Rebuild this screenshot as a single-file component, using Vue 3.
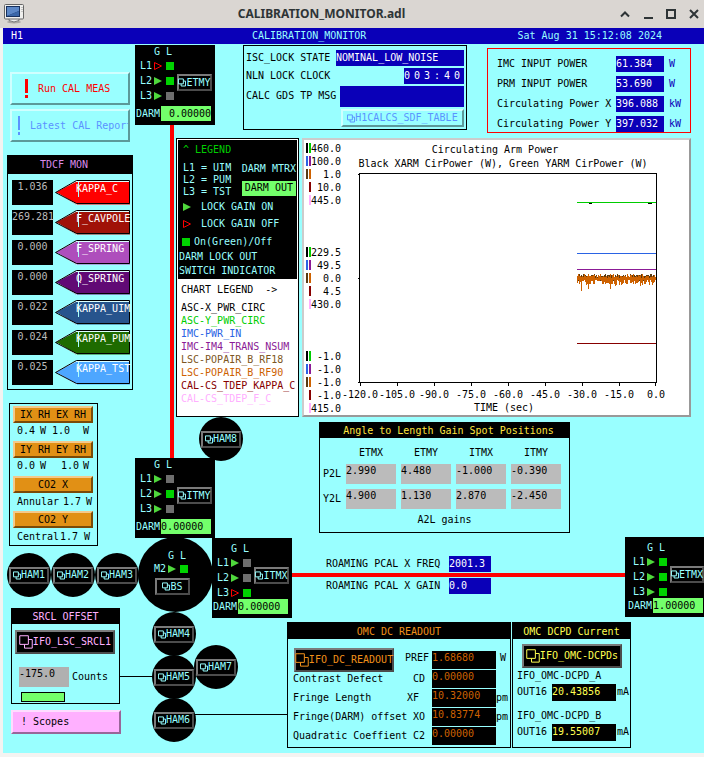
<script setup>
const optics = [
  { name: 'ETMY', place: 'etmy', darm: '0.00000', legs: [['L1', false, true], ['L2', true, true], ['L3', true, false]] },
  { name: 'ITMY', place: 'itmy', darm: '0.00000', legs: [['L1', true, false], ['L2', true, true], ['L3', true, false]] },
  { name: 'ITMX', place: 'itmx', darm: '0.00000', legs: [['L1', true, false], ['L2', true, false], ['L3', false, true]] },
  { name: 'ETMX', place: 'etmx', darm: '1.00000', legs: [['L1', true, true], ['L2', true, true], ['L3', true, true]] },
]
const hams = [1, 2, 3, 4, 5, 6, 7, 8]

const factors = [
  { name: 'KAPPA_C', value: '1.036', color: '#ff0000' },
  { name: 'F_CAVPOLE', value: '269.281', color: '#a01208' },
  { name: 'F_SPRING', value: '0.000', color: '#ae4ebc' },
  { name: 'Q_SPRING', value: '0.000', color: '#610a75' },
  { name: 'KAPPA_UIM', value: '0.022', color: '#27548d' },
  { name: 'KAPPA_PUM', value: '0.024', color: '#1e6b00' },
  { name: 'KAPPA_TST', value: '0.025', color: '#4da6ff' },
]

const powers = [
  ['IMC INPUT POWER', '61.384', 'W'],
  ['PRM INPUT POWER', '53.690', 'W'],
  ['Circulating Power X', '396.088', 'kW'],
  ['Circulating Power Y', '397.032', 'kW'],
]

const channels = [
  ['ASC-X_PWR_CIRC', '#000000'],
  ['ASC-Y_PWR_CIRC', '#00cd00'],
  ['IMC-PWR_IN', '#2a63e4'],
  ['IMC-IM4_TRANS_NSUM', '#8b1a96'],
  ['LSC-POPAIR_B_RF18', '#7d5623'],
  ['LSC-POPAIR_B_RF90', '#cd6100'],
  ['CAL-CS_TDEP_KAPPA_C', '#870000'],
  ['CAL-CS_TDEP_F_C', '#ffb0ff'],
]

const spotHeads = ['ETMX', 'ETMY', 'ITMX', 'ITMY']
const spots = [
  ['P2L', ['2.990', '4.480', '-1.000', '-0.390']],
  ['Y2L', ['4.900', '1.130', '2.870', '-2.450']],
]

const readout = [
  ['Contrast Defect', 'CD', '0.00000', ''],
  ['Fringe Length', 'XF ', '10.32000', 'pm'],
  ['Fringe(DARM) offset', 'XO', '10.83774', 'pm'],
  ['Quadratic Coeffient', 'C2', '0.00000', ''],
]

const axisPairs = [
  ['#000000', '#00cd00'],
  ['#2a63e4', '#8b1a96'],
  ['#593a12', '#cd6100'],
  [null, '#870000'],
  [null, '#ffb0ff'],
]
const axisGroups = [
  { top: 148, labels: ['460.0', '100.0', '1.0', '10.0', '445.0'] },
  { top: 252, labels: ['229.5', '49.5', '0.0', '4.5', '430.0'] },
  { top: 356, labels: ['-1.0', '-1.0', '-1.0', '-1.0', '415.0'] },
]
const ticks = ['-120.0', '-105.0', '-90.0', '-75.0', '-60.0', '-45.0', '-30.0', '-15.0', '0.0']

function noise(seed, base, up, down, spike) {
  let s = seed
  const next = () => (s = (s * 1103515245 + 12345) % 2147483648) / 2147483648
  let d = ''
  for (let x = 577; x < 656; x++) {
    const rare = next() > 0.86 ? spike : 0
    const a = Math.round(base - next() * up)
    const b = Math.round(base + 2 + next() * down + rare * next())
    d += `M${x}.5 ${a}V${b}`
  }
  return d
}
const brown = noise(7, 277, 3, 2, 0)
const orange = noise(21, 278, 4, 5, 9)
</script>

<template>
  <div class="window">
    <svg width="0" height="0" class="defs" aria-hidden="true">
      <symbol id="related" viewBox="0 0 13 13">
        <path d="M.7.7h8v8h-8zM8.700 4.200h3.600v8h-7.200v-3.500" fill="none" stroke="currentColor" vector-effect="non-scaling-stroke" />
      </symbol>
    </svg>

    <div class="titlebar">
      <svg class="app-icon" viewBox="0 0 20 20" width="20" height="20">
        <ellipse cx="10" cy="18" rx="7" ry="1.500" fill="#aaa7a3" />
        <path d="M5 16.500q5 3 10 0v-2H5z" fill="#eee" stroke="#777" />
        <rect x=".5" y=".5" width="19" height="14.500" rx="1" fill="#efefed" stroke="#666" />
        <rect x="2" y="2" width="14" height="11" fill="#17305c" />
        <path d="M3 3h12v4L3 12z" fill="#5c87c6" />
        <path d="M3 12L15 7v5z" fill="#3a66a8" />
        <path d="M18 3v5" stroke="#999" stroke-dasharray="1 1" />
      </svg>
      <h1>CALIBRATION_MONITOR.adl</h1>
      <div class="controls">
        <button aria-label="Shade"><svg viewBox="0 0 12 12"><path d="M2 8.500l4-4 4 4" /></svg></button>
        <button aria-label="Minimize"><svg viewBox="0 0 12 12"><path d="M2 10h9" /></svg></button>
        <button aria-label="Maximize"><svg viewBox="0 0 12 12"><path d="M2 2h8v8h-8z" /></svg></button>
        <button aria-label="Close"><svg viewBox="0 0 12 12"><path d="M2 2l8 8M10 2l-8 8" /></svg></button>
      </div>
    </div>

    <div class="screen">
      <header class="banner">
        <span class="site">H1</span>
        <span class="name">CALIBRATION_MONITOR</span>
        <span class="clock">Sat Aug 31 15:12:08 2024</span>
      </header>

      <main class="board">
        <aside class="left">
          <div class="actions">
            <button class="action run"><span class="bang"></span>Run CAL MEAS</button>
            <button class="action report"><span class="bang"></span>Latest CAL Report</button>
          </div>

          <section class="panel tdcf">
            <h2>TDCF MON</h2>
            <div v-for="f in factors" :key="f.name" class="factor">
              <span class="factor-value">{{ f.value }}</span>
              <button class="arrow">
                <svg viewBox="0 0 76 26" width="76" height="26" aria-hidden="true">
                  <path d="M1 12.500L21 1h54v23.500H21z" :fill="f.color" />
                  <path d="M2 13L22 24.500M1 11.500L21 1.500h53" fill="none" stroke="#dff" />
                  <path d="M.5 12.500L21.500.5h53v23h-53z" fill="none" stroke="#000" />
                  <path d="M23.500 2v15" stroke="#aff" />
                </svg>
                <span>{{ f.name }}</span>
              </button>
            </div>
          </section>

          <section class="panel heaters">
            <button class="amber">IX RH EX RH</button>
            <p><span>0.4</span><span>W</span><span>1.0</span><span>W</span></p>
            <button class="amber">IY RH EY RH</button>
            <p><span>0.0</span><span>W</span><span class="end">1.0</span><span>W</span></p>
            <button class="amber">CO2 X</button>
            <p class="co2"><span>Annular</span><span>1.7</span><span>W</span></p>
            <button class="amber">CO2 Y</button>
            <p class="co2 tight"><span>Central</span><span>1.7</span><span>W</span></p>
          </section>

          <section class="panel srcl">
            <h2>SRCL OFFSET</h2>
            <button class="dark big pink"><svg><use href="#related" /></svg>IFO_LSC_SRCL1</button>
            <label class="offset"><input class="field" value="-175.0" />Counts</label>
            <div class="meter"></div>
          </section>
          <button class="scopes">! Scopes</button>
        </aside>

        <div class="right">
          <div class="row top">
            <section class="panel lock">
              <div class="line"><span>ISC_LOCK STATE</span><span class="blue state">NOMINAL_LOW_NOISE</span></div>
              <div class="line"><span>NLN LOCK CLOCK</span><span class="blue digits"><span v-for="(c, i) in '003:40'" :key="i">{{ c }}</span></span></div>
              <div class="line tall"><span>CALC GDS TP MSG</span><span class="blue message"></span></div>
              <button class="sdf"><svg><use href="#related" /></svg>H1CALCS_SDF_TABLE</button>
            </section>
            <section class="panel power">
              <div v-for="p in powers" :key="p[0]" class="power-row">
                <span>{{ p[0] }}</span><span class="blue">{{ p[1] }}</span><span class="unit">{{ p[2] }}</span>
              </div>
            </section>
          </div>

          <div class="row mid">
            <section class="legend">
              <div class="keys">
                <h2>^ LEGEND</h2>
                <div class="stages">
                  <div><p>L1 = UIM</p><p>L2 = PUM</p><p>L3 = TST</p></div>
                  <div><p class="mtrx">DARM MTRX</p><p class="out">DARM OUT</p></div>
                </div>
                <p class="key"><svg class="tri" viewBox="0 0 8 8"><path class="on" d="M0 0l8 4-8 4z" /></svg>LOCK GAIN ON</p>
                <p class="key"><svg class="tri" viewBox="0 0 8 8"><path class="off" d="M.5 .5l7 3.500-7 3.500z" /></svg>LOCK GAIN OFF</p>
                <p class="key switch"><i class="square lit"></i>On(Green)/Off</p>
                <p class="note">DARM LOCK OUT</p>
                <p class="note">SWITCH INDICATOR</p>
              </div>
              <div class="channels">
                <h3>CHART LEGEND&nbsp; -&gt;</h3>
                <p v-for="c in channels" :key="c[0]" :style="{ color: c[1] }">{{ c[0] }}</p>
              </div>
            </section>

            <section class="chart">
              <svg viewBox="304 140 385 276" height="276" role="img" aria-label="Circulating Arm Power">
                <g class="labels">
                  <text x="495" y="153" text-anchor="middle">Circulating Arm Power</text>
                  <text x="503" y="167" text-anchor="middle">Black XARM CirPower (W), Green YARM CirPower (W)</text>
                  <g v-for="g in axisGroups" :key="g.top">
                    <g v-for="(l, i) in g.labels" :key="i">
                      <rect v-if="axisPairs[i][0]" x="306" :y="g.top + i * 13 - 5" width="2" height="10" :fill="axisPairs[i][0]" />
                      <rect x="309" :y="g.top + i * 13 - 5" width="2" height="10" :fill="axisPairs[i][1]" />
                      <text x="341" :y="g.top + i * 13 + 4" text-anchor="end">{{ l }}</text>
                    </g>
                  </g>
                  <text v-for="(t, i) in ticks" :key="t" :x="360 + i * 37" y="398" text-anchor="middle">{{ t }}</text>
                  <text x="504" y="411" text-anchor="middle">TIME (sec)</text>
                </g>
                <g fill="none" shape-rendering="crispEdges">
                  <path d="M577 202.500h79" stroke="#00cd00" />
                  <path d="M589 203.500h3M648 203.500h4" stroke="#000" />
                  <path d="M577 253.500h79" stroke="#2a63e4" />
                  <path d="M577 269.500h79" stroke="#8b1a96" />
                  <path d="M577 343.500h79" stroke="#870000" />
                  <path :d="brown" stroke="#593a12" />
                  <path :d="orange" stroke="#cd6100" />
                  <path d="M359.500 173.500h297v209h-297z" stroke="#000" />
                  <path d="M358 174.500h2M358 278.500h2M358 382.500h2" stroke="#000" />
                  <path v-for="(t, i) in ticks" :key="t" :d="`M${360.5 + i * 37 - (i === 8 ? 1 : 0)} 383v3`" stroke="#000" />
                </g>
              </svg>
            </section>
          </div>

          <section class="panel spots">
            <h2>Angle to Length Gain Spot Positions</h2>
            <table>
              <thead><tr><td></td><th v-for="h in spotHeads" :key="h" scope="col">{{ h }}</th></tr></thead>
              <tbody>
                <tr v-for="r in spots" :key="r[0]">
                  <th scope="row">{{ r[0] }}</th>
                  <td v-for="(v, i) in r[1]" :key="i"><input class="field" :value="v" :aria-label="`${r[0]} ${spotHeads[i]}`" /></td>
                </tr>
              </tbody>
            </table>
            <p>A2L gains</p>
          </section>

          <section class="roaming">
            <div><span>ROAMING PCAL X FREQ</span><span class="blue">2001.3</span></div>
            <div><span>ROAMING PCAL X GAIN</span><span class="blue">0.0</span></div>
          </section>

          <div class="row omc">
            <section class="panel readout">
              <h2>OMC DC READOUT</h2>
              <div class="read-row first">
                <button class="dark big orange"><svg><use href="#related" /></svg>IFO_DC_READOUT</button>
                <span class="code">PREF</span><span class="black">1.68680</span><span class="center">W</span>
              </div>
              <div v-for="r in readout" :key="r[0]" class="read-row">
                <span>{{ r[0] }}</span><span class="code">{{ r[1] }}</span><span class="black">{{ r[2] }}</span><span>{{ r[3] }}</span>
              </div>
            </section>
            <section class="panel dcpd">
              <h2>OMC DCPD Current</h2>
              <button class="dark big yellow"><svg><use href="#related" /></svg>IFO_OMC-DCPDs</button>
              <div class="diode"><p>IFO_OMC-DCPD_A</p><div><span>OUT16</span><span class="black">20.43856</span><span>mA</span></div></div>
              <div class="diode"><p>IFO_OMC-DCPD_B</p><div><span>OUT16</span><span class="black">19.55007</span><span>mA</span></div></div>
            </section>
          </div>
        </div>

        <!-- Interferometer diagram: beams, chambers and suspensions -->
        <div class="beam arm-y"></div>
        <div class="beam arm-x"></div>
        <div class="wire wire-srcl"></div>
        <div class="wire wire-omc"></div>

        <div v-for="n in hams" :key="n" class="chamber" :class="`ham${n}`">
          <button class="dark"><svg><use href="#related" /></svg>HAM{{ n }}</button>
        </div>

        <div class="splitter">
          <div class="legs">
            <span></span><span>G</span><span>L</span>
            <span>M2</span><svg class="tri" viewBox="0 0 8 8"><path class="on" d="M0 0l8 4-8 4z" /></svg><i class="square lit"></i>
          </div>
          <button class="dark"><svg><use href="#related" /></svg>BS</button>
        </div>

        <div v-for="o in optics" :key="o.name" class="optic" :class="o.place">
          <div class="optic-body">
            <div class="legs">
              <span></span><span>G</span><span>L</span>
              <template v-for="l in o.legs" :key="l[0]">
                <span>{{ l[0] }}</span>
                <svg class="tri" viewBox="0 0 8 8">
                  <path v-if="l[1]" class="on" d="M0 0l8 4-8 4z" />
                  <path v-else class="off" d="M.5 .5l7 3.500-7 3.500z" />
                </svg>
                <i class="square" :class="{ lit: l[2] }"></i>
              </template>
            </div>
            <button class="dark"><svg><use href="#related" /></svg>{{ o.name }}</button>
          </div>
          <label class="darm">DARM<input :value="o.darm" /></label>
        </div>
      </main>
    </div>
  </div>
</template>

<style>
body {
  margin: 0;
  background: #f4f3f1;
}
</style>

<style scoped>
* {
  box-sizing: border-box;
}
.window {
  font: 10px/12px "DejaVu Sans Mono", "Liberation Mono", monospace;
  color: #000;
  white-space: nowrap;
}
.defs {
  position: absolute;
}
h1, h2, h3, p {
  margin: 0;
  font-size: inherit;
  font-weight: normal;
}
button, input {
  font: inherit;
  color: inherit;
  margin: 0;
  padding: 0;
  border: 0;
  border-radius: 0;
  white-space: nowrap;
  min-width: 0;
}
.titlebar {
  display: flex;
  align-items: center;
  height: 28px;
  padding: 0 2px 0 4px;
  background: #dad6d2;
}
.titlebar h1 {
  flex: 1;
  text-align: center;
  font: bold 12px/20px "Noto Sans", "Open Sans", sans-serif;
  color: #2e3436;
}
.controls {
  display: flex;
  gap: 11px;
  padding-right: 2px;
}
.controls button {
  width: 12px;
  height: 12px;
  background: none;
}
.controls svg {
  display: block;
  width: 12px;
  height: 12px;
  fill: none;
  stroke: #2e3436;
  stroke-width: 2;
}
.screen {
  margin: 0 0 4px 3px;
}
.banner {
  display: flex;
  height: 16px;
  padding: 0 42px 0 8px;
  background: #0a00b8;
  color: #9ff;
  line-height: 15px;
}
.site {
  width: 241px;
  color: #fff;
}
.name {
  flex: 1;
}
.board {
  position: relative;
  display: flex;
  background: #9ff;
}
.left {
  width: 173px;
  padding: 28px 0 19px 4px;
}
.right {
  flex: 1;
  min-width: 0;
  padding: 1px 13px 5px 0;
}
.panel {
  border: 1px solid #000;
}
.panel h2 {
  background: #000;
  text-align: center;
}
.row {
  display: flex;
}
.blue {
  background: #0a00b8;
  color: #fff;
  height: 16px;
  line-height: 15px;
}
.black {
  background: #000;
}

/* left column */
.actions {
  display: grid;
  gap: 4px;
  width: 120px;
  margin-left: 3px;
}
.action {
  display: flex;
  align-items: center;
  height: 33px;
  overflow: hidden;
  background: #9ff;
  border: 2px solid;
  border-color: #d0ffff #5c9999 #5c9999 #d0ffff;
}
.run {
  color: #f00;
  padding-left: 13px;
  gap: 10px;
}
.report {
  color: #5b93ff;
  padding-left: 6px;
  gap: 10px;
}
.bang {
  flex: none;
  width: 3px;
  height: 19px;
  background: linear-gradient(currentColor 14px, transparent 14px 16px, currentColor 16px);
}
.report .bang {
  width: 2px;
}
.tdcf {
  width: 126px;
  height: 235px;
  margin-top: 13px;
}
.tdcf h2 {
  height: 18px;
  line-height: 18px;
  padding-right: 12px;
  margin-bottom: 6px;
  color: #d98ae9;
}
.factor {
  display: flex;
  height: 30px;
  padding-left: 4px;
  gap: 2px;
}
.factor-value {
  width: 41px;
  height: 25px;
  padding-top: 1px;
  background: #000;
  color: #bbb;
  text-align: center;
}
.arrow {
  display: grid;
  width: 76px;
  height: 26px;
  background: none;
  color: #fff;
  text-align: left;
}
.arrow svg, .arrow span {
  grid-area: 1 / 1;
}
.arrow span {
  padding: 3px 0 0 21px;
}
.heaters {
  width: 89px;
  height: 143px;
  margin: 13px 0 0 2px;
  padding: 2px 0 0 3px;
}
.amber {
  display: block;
  width: 80px;
  height: 17px;
  line-height: 12px;
  background: #e19015;
  border: 2px solid;
  border-color: #f3c98c #7a4a08 #7a4a08 #f3c98c;
}
.heaters p {
  display: grid;
  grid-template-columns: 19px 8px 27px 6px;
  column-gap: 4px;
  height: 18px;
  padding-left: 4px;
  line-height: 15px;
}
.heaters .co2 {
  grid-template-columns: 42px 19px 6px;
  line-height: 17px;
}
.heaters .tight {
  grid-template-columns: 42px 23px 6px;
  column-gap: 1px;
}
.end {
  text-align: right;
}
.srcl {
  width: 109px;
  height: 96px;
  margin: 62px 0 0 4px;
}
.srcl h2 {
  height: 15px;
  line-height: 15px;
  color: #ffb0ff;
}
.dark {
  display: flex;
  align-items: center;
  justify-content: center;
  height: 17px;
  background: #000;
  color: #9ff;
  border: 2px solid;
  border-color: #7a7a7a #4c4c4c #4c4c4c #7a7a7a;
}
.dark svg, .sdf svg {
  flex: none;
  width: 8px;
  height: 9px;
}
.dark.big {
  width: 100px;
  height: 24px;
}
.dark.big svg {
  width: 14px;
  height: 14px;
}
.dark.pink {
  margin: 6px 0 0 3px;
  color: #ffb0ff;
}
.dark.orange {
  color: #f0901a;
}
.dark.yellow {
  color: #ffff50;
}
.offset {
  display: flex;
  align-items: center;
  gap: 3px;
  margin: 13px 0 0 7px;
}
.field {
  display: block;
  width: 50px;
  height: 20px;
  padding-bottom: 7px;
  background: #b0b0b0;
}
.meter {
  width: 44px;
  height: 10px;
  margin: 5px 0 0 9px;
  background: #73ff6b;
  border: 1px solid #000;
}
.scopes {
  display: block;
  width: 110px;
  height: 24px;
  margin: 6px 0 0 4px;
  padding-left: 8px;
  text-align: left;
  background: #ffb0ff;
  border: 2px solid;
  border-color: #ffdcff #996699 #996699 #ffdcff;
}

/* status panels */
.top {
  align-items: flex-start;
  justify-content: space-between;
  margin-left: 67px;
  height: 93px;
}
.lock {
  width: 224px;
  height: 85px;
  padding: 4px 2px 0 2px;
}
.line {
  display: flex;
  justify-content: space-between;
  height: 18px;
  line-height: 15px;
}
.state {
  width: 128px;
}
.digits {
  display: grid;
  grid-template-columns: repeat(6, 10px);
}
.tall {
  height: 23px;
  line-height: 20px;
}
.message {
  width: 124px;
  height: 21px;
}
.sdf {
  display: flex;
  align-items: center;
  justify-content: center;
  width: 123px;
  height: 18px;
  margin-left: auto;
  background: #9ff;
  color: #5b93ff;
  border: 2px solid;
  border-color: #d0ffff #5c9999 #5c9999 #d0ffff;
}
.power {
  width: 204px;
  height: 85px;
  margin-top: 3px;
  padding: 7px 0 0 9px;
  border-color: #f00;
}
.power-row {
  display: grid;
  grid-template-columns: 119px 48px auto;
  height: 20px;
  line-height: 15px;
}
.unit {
  padding-left: 5px;
  color: #0a00b8;
}

/* legend and chart */
.mid {
  gap: 3px;
}
.legend {
  flex: none;
  width: 123px;
  height: 279px;
  padding: 1px;
  border: 1px solid #000;
  background: #fff;
}
.keys {
  height: 139px;
  padding: 4px 1px 0;
  background: #000;
  color: #9ff;
}
.keys h2 {
  padding-left: 4px;
  height: 18px;
  color: #00cd00;
}
.stages {
  display: flex;
  justify-content: space-between;
  padding-left: 4px;
}
.mtrx {
  height: 19px;
  line-height: 14px;
}
.out {
  height: 15px;
  line-height: 14px;
  padding: 0 3px;
  background: #73ff6b;
  color: #000;
}
.key {
  display: flex;
  align-items: center;
  gap: 10px;
  height: 17px;
  padding-left: 4px;
}
.tri {
  display: block;
  width: 8px;
  height: 8px;
  overflow: visible;
}
.on {
  fill: #4fd83c;
}
.off {
  fill: none;
  stroke: #f00;
}
.square {
  display: block;
  width: 8px;
  height: 8px;
  background: #6e6e6e;
}
.square.lit {
  background: #00d400;
}
.switch {
  gap: 4px;
  padding-left: 3px;
  height: 19px;
  line-height: 19px;
}
.note {
  height: 14px;
}
.channels {
  padding: 4px 3px 0;
  line-height: 13px;
}
.channels h3 {
  height: 18px;
}
.chart {
  flex: 1;
  min-width: 0;
  height: 279px;
  background: #fff;
  border: 2px solid;
  border-color: #ccc #999 #999 #ccc;
}
.chart svg {
  display: block;
  width: 100%;
}
.labels {
  font: 10px "DejaVu Sans Mono", "Liberation Mono", monospace;
}

/* spot positions */
.spots {
  width: 251px;
  height: 111px;
  margin: 5px 0 0 143px;
}
.spots h2 {
  height: 15px;
  line-height: 15px;
  padding-left: 8px;
  color: #ffe640;
}
.spots table {
  margin: 4px 0 0 -2px;
  border-spacing: 5px 5px;
  border-collapse: separate;
}
.spots td, .spots th {
  padding: 0;
  font-weight: normal;
}
.spots thead th {
  height: 12px;
}
.spots tbody th {
  width: 16px;
}
.spots .field {
  background: #bbb;
}
.spots p {
  text-align: center;
}
.roaming {
  display: grid;
  gap: 6px;
  margin: 23px 0 0 150px;
}
.roaming div {
  display: flex;
  line-height: 16px;
}
.roaming span:first-child {
  width: 123px;
}
.roaming .blue {
  width: 42px;
  line-height: 15px;
}

/* output mode cleaner */
.omc {
  gap: 1px;
  margin: 28px 0 0 111px;
}
.omc .panel {
  height: 126px;
}
.omc h2 {
  height: 16px;
  line-height: 17px;
}
.readout {
  width: 224px;
}
.readout h2 {
  color: #f0901a;
}
.read-row {
  display: grid;
  grid-template-columns: 115px 24px 64px 1fr;
  height: 19px;
  padding-left: 5px;
  line-height: 18px;
}
.read-row > .code {
  padding-right: 7px;
  white-space: pre;
  justify-self: end;
}
.read-row .black {
  height: 18px;
  line-height: 14px;
  color: #cd6100;
}
.read-row.first {
  grid-template-columns: 111px 28px 64px 1fr;
  height: 31px;
  padding-top: 12px;
}
.read-row.first .big {
  margin: -3px 0 0 1px;
}
.read-row.first .code {
  padding-right: 3px;
  line-height: 14px;
}
.center {
  text-align: center;
  line-height: 14px;
}
.dcpd {
  width: 119px;
}
.dcpd h2, .dcpd .black {
  color: #ffff50;
}
.dcpd .big {
  margin: 5px 0 1px 9px;
}
.diode {
  height: 40px;
  padding: 1px 0 0 4px;
}
.diode div {
  display: grid;
  grid-template-columns: 34px 64px auto;
  column-gap: 1px;
  height: 17px;
  margin-top: 2px;
  line-height: 15px;
}

/* diagram */
.beam, .wire, .chamber, .splitter, .optic {
  position: absolute;
}
.beam {
  background: #f00;
}
.arm-y {
  left: 167px;
  top: 81px;
  width: 4px;
  height: 333px;
}
.arm-x {
  left: 289px;
  right: 79px;
  top: 529px;
  height: 4px;
}
.wire {
  height: 1px;
  background: #000;
}
.wire-srcl {
  left: 117px;
  top: 632px;
  width: 34px;
}
.wire-omc {
  left: 190px;
  top: 670px;
  width: 94px;
}
.chamber {
  display: grid;
  place-items: center;
  width: 44px;
  height: 44px;
  border-radius: 50%;
  background: #000;
}
.chamber .dark {
  width: 40px;
}
.ham1 { left: 4px; top: 509px; }
.ham2 { left: 48px; top: 509px; }
.ham3 { left: 92px; top: 509px; }
.ham4 { left: 149px; top: 568px; }
.ham5 { left: 149px; top: 611px; }
.ham6 { left: 149px; top: 654px; }
.ham7 { left: 191px; top: 601px; }
.ham8 { left: 196px; top: 373px; }
.splitter {
  left: 135px;
  top: 493px;
  width: 75px;
  height: 75px;
  padding: 13px 0 0 16px;
  border-radius: 50%;
  background: #000;
}
.splitter .legs {
  grid-template-rows: 12px 13px;
}
.splitter .dark {
  width: 35px;
  margin: 3px 0 0 1px;
}
.legs {
  display: grid;
  grid-template-columns: 14px 12px 10px;
  grid-template-rows: 13px repeat(3, 15px);
  align-items: center;
  color: #9ff;
}
.optic {
  width: 80px;
  height: 80px;
  background: #000;
}
.optic-body {
  display: flex;
  align-items: flex-start;
  height: 61px;
  padding-left: 5px;
}
.optic-body .dark {
  width: 35px;
  margin: 29px 0 0 1px;
}
.darm {
  display: flex;
  align-items: center;
  gap: 1px;
  padding-left: 1px;
  color: #9ff;
}
.darm input {
  width: 50px;
  height: 15px;
  background: #73ff6b;
  color: #000;
}
.etmy { left: 132px; top: 1px; }
.etmy input { text-align: right; }
.itmy { left: 132px; top: 414px; }
.itmx { left: 209px; top: 494px; }
.etmx { right: 0; top: 493px; }
.itmx .legs, .etmx .legs {
  padding-top: 4px;
}
.etmx .optic-body {
  padding-left: 8px;
}
.etmx .darm {
  padding-left: 3px;
}
.etmx {
  width: 79px;
}
</style>
